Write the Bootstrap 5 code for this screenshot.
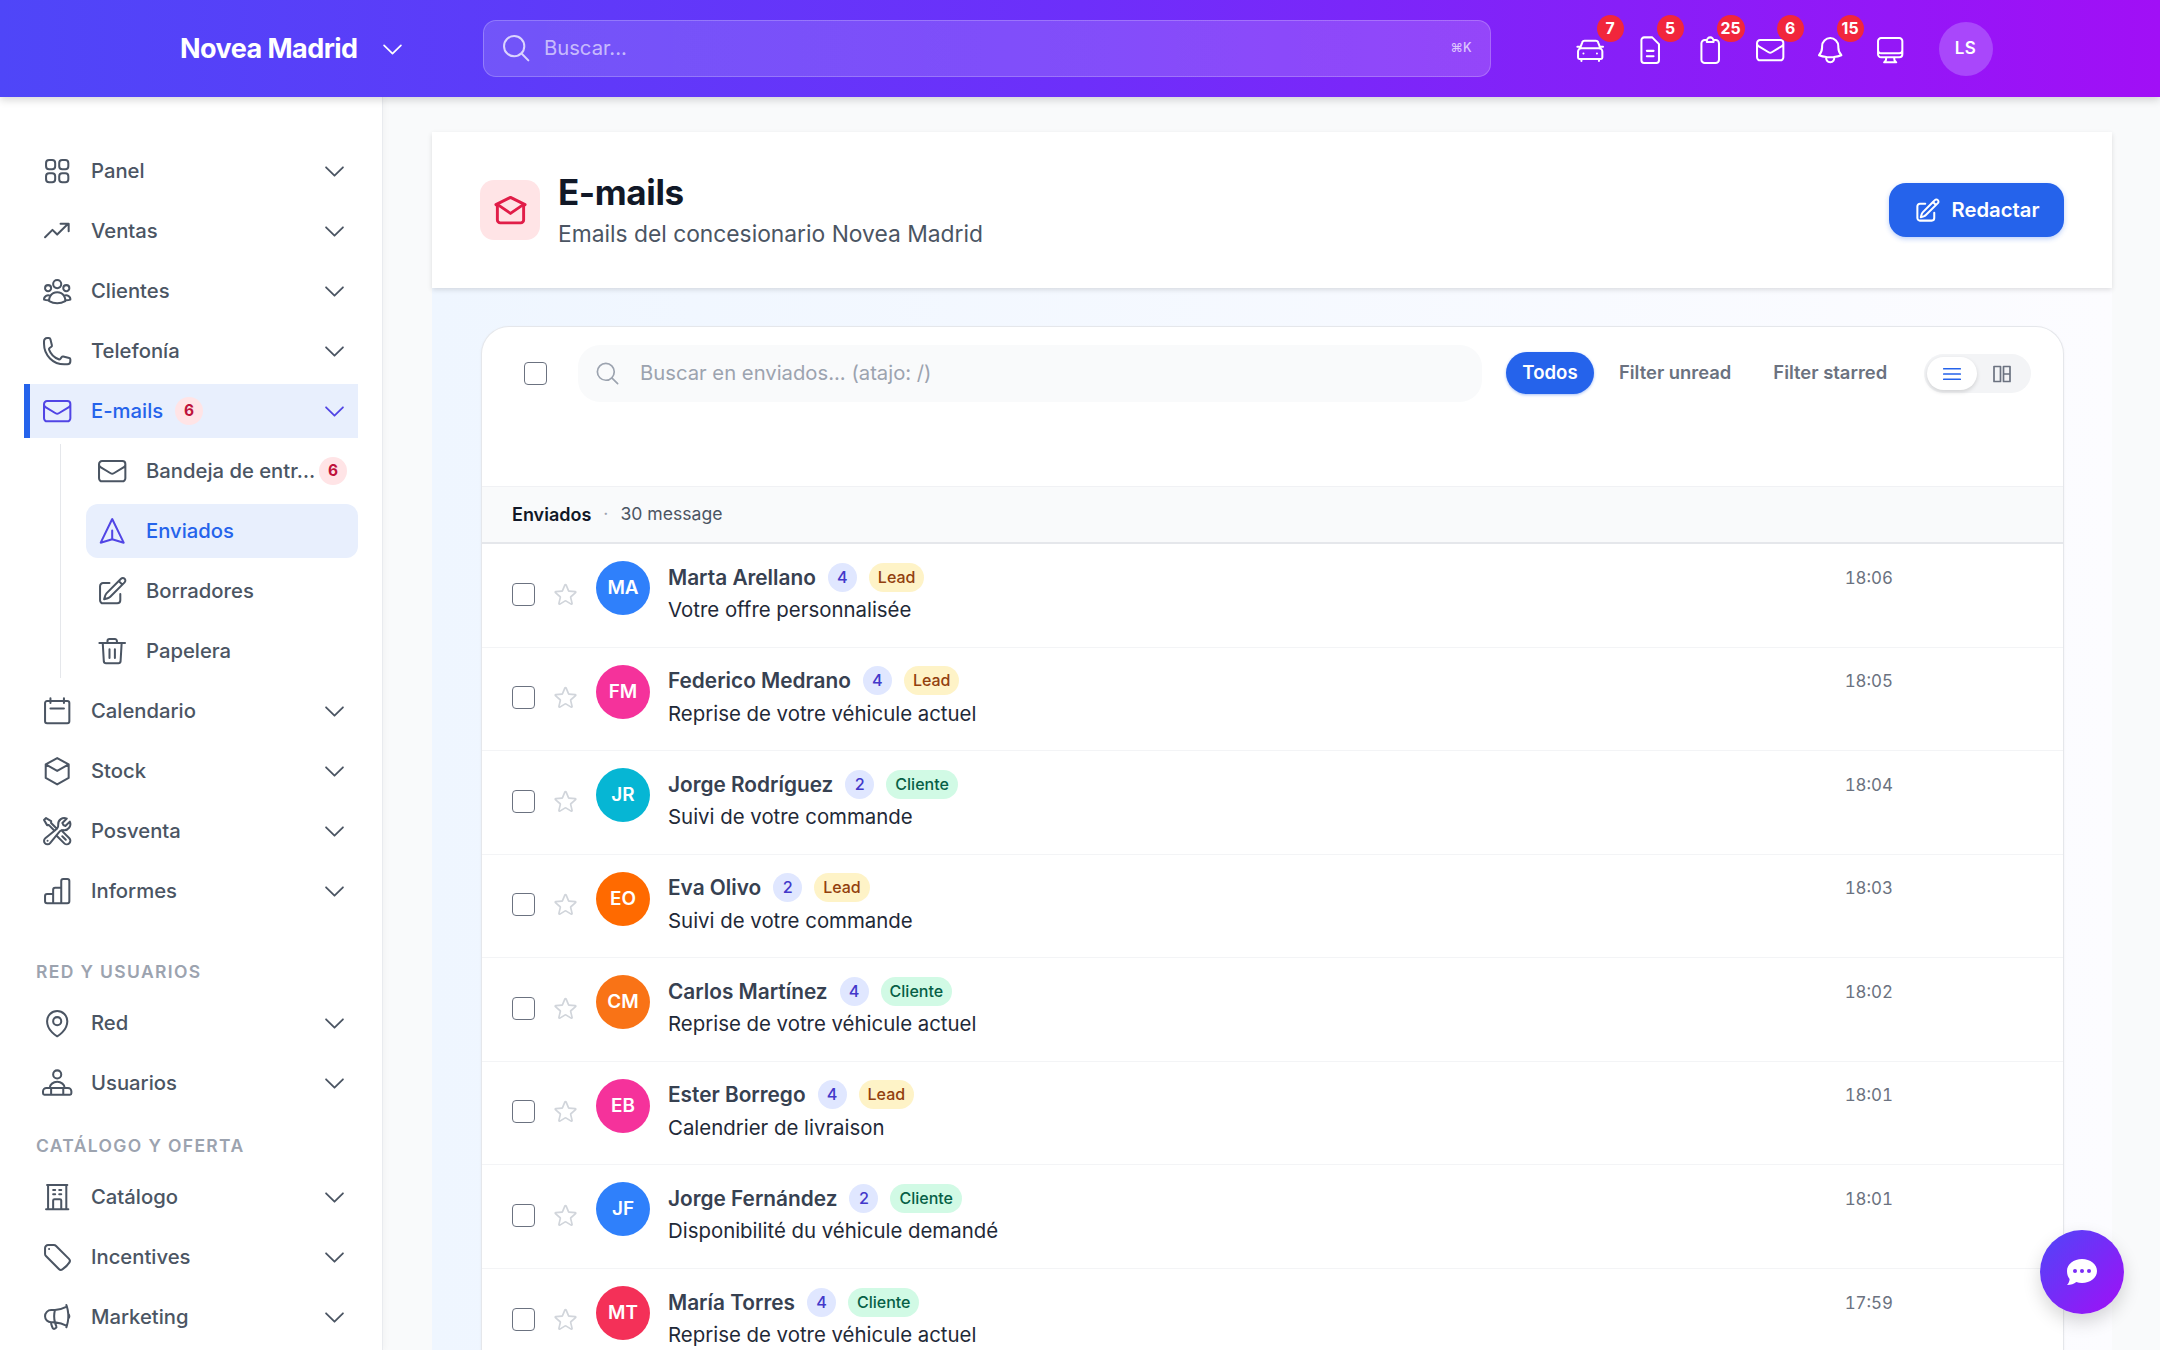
<!DOCTYPE html>
<html lang="es">
<head>
<meta charset="UTF-8">
<title>E-mails - Novea Madrid</title>
<link href="https://cdn.jsdelivr.net/npm/bootstrap@5.3.3/dist/css/bootstrap.min.css" rel="stylesheet">
<style>
  body{font-family:Inter,"Liberation Sans",sans-serif;background:#f9fafb;color:#374151;height:100vh;overflow:hidden}
  .ico{width:32.4px;height:32.4px;fill:none;stroke:currentColor;stroke-width:1.5;stroke-linecap:round;stroke-linejoin:round;flex:none}
  .sprite{display:none}

  .top-bar{height:97px;flex:none;padding:0 0 0 180px;background:linear-gradient(90deg,#4f46f8,#6d2ffa 50%,#a10ff6);box-shadow:0 3px 8px rgba(0,0,0,.16);position:relative;z-index:5;flex-wrap:nowrap;justify-content:flex-start}
  .brand-name{font-size:27px;font-weight:700;color:#fff;letter-spacing:-.55px;line-height:1}
  .brand-chev{width:27px;height:27px;color:#fff;margin:2px 0 0 21px}
  .top-search{width:1008px;height:57px;margin-left:77px;padding:0 18px 0 16px;border:1.5px solid rgba(255,255,255,.22);border-radius:13px;background:linear-gradient(90deg,rgba(255,255,255,.13),rgba(255,255,255,.16));color:rgba(255,255,255,.75)}
  .top-search input{background:none;border:0;outline:0;color:#fff;font-size:20.25px;flex:1;margin-left:12px;padding:0}
  .top-search input::placeholder{color:rgba(255,255,255,.62)}
  .kbd-hint{font-size:12.5px;color:rgba(255,255,255,.7);font-weight:500}
  .top-icons{margin-left:70px}
  .top-ico{width:60px;height:54px;color:#fff;position:relative;display:flex;align-items:center;justify-content:center;margin-top:3px}
  .top-count{position:absolute;top:-8px;left:36px;min-width:27px;height:27px;padding:0 4px;border-radius:14px;background:#f1263c;color:#fff;font-size:15.8px;font-weight:700;line-height:27px;text-align:center}
  .top-user{width:54px;height:54px;margin-left:18px;border-radius:50%;background:#a947fb;color:#fff;font-size:17px;font-weight:600;letter-spacing:.5px}

  .side-bar{width:383px;flex:none;background:#fff;border-right:1.5px solid #e9ebef;padding:47px 0 0 24px;box-shadow:2px 0 6px rgba(0,0,0,.03);overflow:hidden;z-index:2}
  .side-item{height:54px;width:334px;margin-bottom:6px;padding:0 10px 0 17px;display:flex;align-items:center;font-size:20.25px;font-weight:500;color:#4b5563;text-decoration:none;flex:none}
  .side-item .ico{margin-right:17.6px}
  .side-item .side-chev{width:27px;height:27px;margin:0 0 0 auto;stroke-width:1.6}
  .side-item.is-open{background:#e8effd;color:#2563eb;border-left:6px solid #2563eb;padding-left:11px}
  .side-item.is-open .ico{color:#5145e5}
  .side-num{width:28px;height:28px;border-radius:50%;background:#ffe4e6;color:#be123c;font-size:15.5px;font-weight:700;display:flex;align-items:center;justify-content:center;flex:none}
  .is-open .side-num{margin-left:12px}
  .side-sub{margin:0 0 6px 36px;padding-left:25px;border-left:1.5px solid #e5e7eb;height:234px}
  .side-sub .side-item{width:272px;padding:0 12px 0 10px}
  .side-sub .side-item.is-here{background:#e8effd;color:#2563eb;border-radius:12px}
  .side-sub .is-here .ico{color:#5145e5}
  .side-sub .cut{white-space:nowrap;flex:1;margin-right:4px}
  .side-title{font-size:17.5px;font-weight:600;letter-spacing:1.35px;color:#9ca3af;height:24px;line-height:24px;margin:24px 0 12px 12px}
  .side-title.first{margin-top:42px}

  .main-col{min-width:0}
  .title-wrap{padding:35px 48px 0 49px;flex:none}
  .title-card{height:156px;padding:0 48px;background:#fff;border:0;border-radius:0;box-shadow:0 2px 5px rgba(0,0,0,.12);flex-direction:row;align-items:center;position:relative;z-index:1}
  .title-ico{width:60px;height:60px;border-radius:14px;background:#ffe4e6;color:#e11d48;margin-right:18px;flex:none}
  .title-ico .ico{width:35px;height:35px;stroke-width:2}
  .title-txt{margin-top:1px}
  .title-txt h1{font-size:35px;font-weight:700;color:#111827;margin:0;line-height:44px;letter-spacing:-.4px}
  .title-txt p{font-size:22.8px;color:#4b5563;margin:3px 0 0;line-height:34px}
  .btn.compose{margin-left:auto;width:175px;height:54px;padding:0;border:0;border-radius:17px;background:#2563eb;color:#fff;font-size:20.25px;font-weight:600;box-shadow:0 2px 5px rgba(37,99,235,.3);gap:11px}
  .compose .ico{width:27px;height:27px;stroke-width:1.8}
  .list-outer{padding:0 48px 0 49px;min-height:0}
  .list-wrap{padding:38px 48px 0 49px;height:100%;background:linear-gradient(90deg,#eff6ff,#fcfcff)}
  .mail-card{border:1.5px solid #e5e7eb;border-bottom:0;border-radius:28px 28px 0 0;background:#fff;overflow:hidden;box-shadow:0 1px 3px rgba(0,0,0,.05)}
  .tool-row{height:159px;padding:18px 0 0 42px;align-items:flex-start}
  .tool-row .form-check-input{margin:17px 31px 0 0}
  .form-check-input{width:23px;height:23px;border:1.5px solid #6b7280;border-radius:4px;margin:0;flex:none}
  .mail-search{width:904px;height:57px;padding:0 16px;background:#f9fafb;border-radius:22px;color:#9ca3af;flex:none}
  .mail-search .ico{width:27px;height:27px}
  .mail-search input{background:none;border:0;outline:0;font-size:20.25px;flex:1;padding:0;margin-left:19px;color:#374151}
  .mail-search input::placeholder{color:#9ca3af}
  .pill-on{height:42px;width:88px;margin:7px 0 0 24px;padding:0;border:0;border-radius:21px;background:#2563eb;color:#fff;font-size:18.6px;font-weight:600;box-shadow:0 1px 3px rgba(37,99,235,.4)}
  .pill-off{height:42px;margin:7px 0 0 25px;padding:0;border:0;background:none;color:#6b7280;font-size:18.4px;font-weight:600}
  .pill-off + .pill-off{margin-left:42px}
  .view-sw{margin:9px 0 0 37px;width:107px;height:39px;padding:3px;background:#f3f4f6;border-radius:20px;flex:none}
  .view-sw span{width:50px;height:33px;display:flex;align-items:center;justify-content:center;color:#6b7280}
  .view-sw span.on{background:#fff;border-radius:17px;color:#2563eb;box-shadow:0 2px 4px rgba(0,0,0,.14)}
  .view-sw .ico{width:24px;height:24px;stroke-width:1.7}
  .group-row{height:57px;padding:0 30px;background:#f9fafb;border-top:1.5px solid #f0f1f4;border-bottom:1.5px solid #e5e7eb;font-size:17.6px}
  .group-row b{font-weight:600;color:#111827;font-size:18px}
  .group-row .sep{margin:0 12px;color:#9ca3af}
  .group-row span{color:#4b5563}
  .mail-row{height:103.5px;padding:0 170px 0 30px;border:0;border-bottom:1.5px solid #f3f4f6;border-radius:0!important;display:flex;align-items:center}
  .mail-row .form-check-input{margin-top:-2px}
  .mail-star{width:27px;height:27px;margin:-2px 17px 0 17px;color:#d1d5db}
  .mail-av{width:54px;height:54px;border-radius:50%;color:#fff;font-size:18.9px;font-weight:600;flex:none;margin:-14px 18px 0 0}
  .mail-body{flex:1;min-width:0;margin-top:-3px}
  .mail-top{height:32px;gap:12px}
  .mail-name{font-size:20.8px;font-weight:600;color:#374151}
  .mail-sub{font-size:20.4px;color:#1f2937;line-height:32px;margin-top:1px}
  .tag-num{width:29px;height:29px;padding:0;border-radius:50%;background:#e0e7ff;color:#4338ca;font-size:16.2px;font-weight:500;line-height:29px}
  .tag-kind{height:29px;padding:0 9px;border-radius:15px;font-size:16px;font-weight:500;line-height:29px}
  .tag-lead{background:#fef3c7;color:#92400e}
  .tag-client{background:#d1fae5;color:#065f46}
  .mail-time{font-size:16.9px;color:#6b7280;margin-top:-34px;font-variant-numeric:tabular-nums}
  .chat-fab{position:fixed;left:2040px;top:1230px;width:84px;height:84px;border-radius:50%;border:0;padding:0;background:linear-gradient(135deg,#4f46f8,#a10ff6);box-shadow:0 8px 18px rgba(0,0,0,.16);z-index:9}
  .chat-fab svg{width:34px;height:32px}
</style>
</head>
<body class="d-flex flex-column">

<svg class="sprite" xmlns="http://www.w3.org/2000/svg">
  <symbol id="i-chev" viewBox="0 0 24 24"><path d="m19.5 8.25-7.5 7.5-7.5-7.5"/></symbol>
  <symbol id="i-search" viewBox="0 0 24 24"><path d="m21 21-5.197-5.197m0 0A7.5 7.5 0 1 0 5.196 5.196a7.5 7.5 0 0 0 10.607 10.607Z"/></symbol>
  <symbol id="i-panel" viewBox="0 0 24 24"><path d="M3.75 6A2.25 2.25 0 0 1 6 3.75h2.25A2.25 2.25 0 0 1 10.5 6v2.25a2.25 2.25 0 0 1-2.25 2.25H6a2.25 2.25 0 0 1-2.25-2.25V6ZM3.75 15.75A2.25 2.25 0 0 1 6 13.5h2.25a2.25 2.25 0 0 1 2.25 2.25V18a2.25 2.25 0 0 1-2.25 2.25H6A2.25 2.25 0 0 1 3.75 18v-2.25ZM13.5 6a2.25 2.25 0 0 1 2.25-2.25H18A2.25 2.25 0 0 1 20.25 6v2.25A2.25 2.25 0 0 1 18 10.5h-2.25a2.25 2.25 0 0 1-2.25-2.25V6ZM13.5 15.75a2.25 2.25 0 0 1 2.25-2.25H18a2.25 2.25 0 0 1 2.25 2.25V18A2.25 2.25 0 0 1 18 20.25h-2.25A2.25 2.25 0 0 1 13.5 18v-2.25Z"/></symbol>
  <symbol id="i-trend" viewBox="0 0 24 24"><path d="M3 16.5 8.500 11l3.500 3.500L19.500 7M14.500 6.500H20.500V12"/></symbol>
  <symbol id="i-group" viewBox="0 0 24 24"><path d="M18 18.72a9.094 9.094 0 0 0 3.741-.479 3 3 0 0 0-4.682-2.72m.94 3.198.001.031c0 .225-.012.447-.037.666A11.944 11.944 0 0 1 12 21c-2.17 0-4.207-.576-5.963-1.584A6.062 6.062 0 0 1 6 18.719m12 0a5.971 5.971 0 0 0-.941-3.197m0 0A5.995 5.995 0 0 0 12 12.75a5.995 5.995 0 0 0-5.058 2.772m0 0a3 3 0 0 0-4.681 2.72 8.986 8.986 0 0 0 3.74.477m.94-3.197a5.971 5.971 0 0 0-.94 3.197M15 6.75a3 3 0 1 1-6 0 3 3 0 0 1 6 0Zm6 3a2.25 2.25 0 1 1-4.5 0 2.25 2.25 0 0 1 4.5 0Zm-13.5 0a2.25 2.25 0 1 1-4.5 0 2.25 2.25 0 0 1 4.5 0Z"/></symbol>
  <symbol id="i-phone" viewBox="0 0 24 24"><path d="M2.25 6.75c0 8.284 6.716 15 15 15h2.25a2.25 2.25 0 0 0 2.25-2.25v-1.372c0-.516-.351-.966-.852-1.091l-4.423-1.106c-.44-.11-.902.055-1.173.417l-.97 1.293c-.282.376-.769.542-1.21.38a12.035 12.035 0 0 1-7.143-7.143c-.162-.441.004-.928.38-1.21l1.293-.97c.363-.271.527-.734.417-1.173L6.963 3.102a1.125 1.125 0 0 0-1.091-.852H4.5A2.25 2.25 0 0 0 2.25 4.5v2.25Z"/></symbol>
  <symbol id="i-mail" viewBox="0 0 24 24"><path d="M21.75 6.75v10.5a2.25 2.25 0 0 1-2.25 2.25h-15a2.25 2.25 0 0 1-2.25-2.25V6.75m19.5 0A2.25 2.25 0 0 0 19.5 4.5h-15a2.25 2.25 0 0 0-2.25 2.25m19.5 0v.243a2.25 2.25 0 0 1-1.07 1.916l-7.5 4.615a2.25 2.25 0 0 1-2.36 0L3.32 8.91a2.25 2.25 0 0 1-1.07-1.916V6.75"/></symbol>
  <symbol id="i-mailopen" viewBox="0 0 24 24"><path d="M3 8.500v10a2 2 0 0 0 2 2h14a2 2 0 0 0 2-2v-10"/><path d="M2 8 12 3l10 5"/><path d="M4 8.500 12 14l8-5.500"/></symbol>
  <symbol id="i-send" viewBox="0 0 24 24"><path d="M12 3 3.500 20.500 12 18l8.500 2.500L12 3Zm0 15v-6.500"/></symbol>
  <symbol id="i-pen" viewBox="0 0 24 24"><path d="m16.862 4.487 1.687-1.688a1.875 1.875 0 1 1 2.652 2.652L10.582 16.07a4.5 4.5 0 0 1-1.897 1.13L6 18l.8-2.685a4.5 4.5 0 0 1 1.13-1.897l8.932-8.931Zm0 0L19.5 7.125M18 14v4.75A2.25 2.25 0 0 1 15.75 21H5.25A2.25 2.25 0 0 1 3 18.75V8.25A2.25 2.25 0 0 1 5.25 6H10"/></symbol>
  <symbol id="i-trash" viewBox="0 0 24 24"><path d="M2.500 6h19M8.500 6V4.500A1.500 1.500 0 0 1 10 3h4a1.500 1.500 0 0 1 1.500 1.500V6M5 6l.8 13.600A1.600 1.600 0 0 0 7.400 21h9.200a1.600 1.600 0 0 0 1.600-1.400L19 6M10 10.500v6.500M14 10.500v6.500"/></symbol>
  <symbol id="i-cal" viewBox="0 0 24 24"><path d="M7 2.500V6M17 2.500V6M4.500 4.500h15A1.500 1.500 0 0 1 21 6v13.500a1.500 1.500 0 0 1-1.500 1.500h-15A1.500 1.500 0 0 1 3 19.500V6a1.500 1.500 0 0 1 1.500-1.500ZM7 10h10"/></symbol>
  <symbol id="i-cube" viewBox="0 0 24 24"><path d="M12 2.250 20.500 7v10L12 21.750 3.500 17V7L12 2.250ZM3.500 7l8.500 4.800L20.500 7"/></symbol>
  <symbol id="i-tools" viewBox="0 0 24 24"><path d="M11.42 15.17 17.25 21A2.652 2.652 0 0 0 21 17.25l-5.877-5.877M11.42 15.17l2.496-3.03c.317-.384.74-.626 1.208-.766M11.42 15.17l-4.655 5.653a2.548 2.548 0 1 1-3.586-3.586l6.837-5.63m5.108-.233c.55-.164 1.163-.188 1.743-.14a4.5 4.5 0 0 0 4.486-6.336l-3.276 3.277a3.004 3.004 0 0 1-2.25-2.25l3.276-3.276a4.5 4.5 0 0 0-6.336 4.486c.091 1.076-.071 2.264-.904 2.95l-.102.085m-1.745 1.437L5.909 7.5H4.5L2.25 3.75l1.5-1.5L7.5 4.5v1.409l4.26 4.26m-1.745 1.437 1.745-1.437m6.615 8.206L15.75 15.75M4.867 19.125h.008v.008h-.008v-.008Z"/></symbol>
  <symbol id="i-chart" viewBox="0 0 24 24"><path d="M3 15.500a1.500 1.500 0 0 1 1.500-1.500H9v7H4.500A1.500 1.500 0 0 1 3 19.500v-4ZM9 11a1.500 1.500 0 0 1 1.500-1.500H15V21H9V11ZM15 4.500A1.500 1.500 0 0 1 16.500 3h3A1.500 1.500 0 0 1 21 4.500v15a1.500 1.500 0 0 1-1.500 1.500H15V4.500Z"/></symbol>
  <symbol id="i-pin" viewBox="0 0 24 24"><path d="M15 10.500a3 3 0 1 1-6 0 3 3 0 0 1 6 0Z"/><path d="M19.500 10.500c0 7.142-7.500 11.250-7.500 11.250S4.500 17.642 4.500 10.500a7.500 7.500 0 1 1 15 0Z"/></symbol>
  <symbol id="i-users" viewBox="0 0 24 24"><path d="M15 5.500a3 3 0 1 1-6 0 3 3 0 0 1 6 0ZM6.500 15.500a5.500 4.500 0 0 1 11 0M2.500 20.500a1 1 0 0 1-1-1V18a2.500 2.500 0 0 1 2.500-2.500h16a2.500 2.500 0 0 1 2.500 2.500v1.500a1 1 0 0 1-1 1h-19ZM7.500 15.500v5M16.500 15.500v5"/></symbol>
  <symbol id="i-build" viewBox="0 0 24 24"><path d="M3.750 21h16.500M4.500 3h15M5.250 3v18m13.500-18v18M9 6.750h1.500m-1.500 3h1.500m3-3H15m-1.500 3H15M9 21v-6.500a1 1 0 0 1 1-1h4a1 1 0 0 1 1 1V21"/></symbol>
  <symbol id="i-tag" viewBox="0 0 24 24"><path d="M9.568 3H5.250A2.250 2.250 0 0 0 3 5.250v4.318c0 .597.237 1.170.659 1.591l9.581 9.581c.699.699 1.780.872 2.607.330a18.095 18.095 0 0 0 5.223-5.223c.542-.827.369-1.908-.330-2.607L11.160 3.660A2.250 2.250 0 0 0 9.568 3Z"/><path d="M6 6h.008v.008H6V6Z"/></symbol>
  <symbol id="i-mega" viewBox="0 0 24 24"><path d="M10.340 15.840c-.688-.060-1.386-.090-2.090-.090H7.500a4.500 4.500 0 1 1 0-9h.750c.704 0 1.402-.030 2.090-.090m0 9.180c.253.962.584 1.892.985 2.783.247.550.060 1.210-.463 1.511l-.657.380c-.551.318-1.260.117-1.527-.461a20.845 20.845 0 0 1-1.440-4.282m3.102.069a18.030 18.030 0 0 1-.590-4.590c0-1.586.205-3.124.590-4.590m0 9.180a23.848 23.848 0 0 1 8.835 2.535M10.340 6.660a23.847 23.847 0 0 0 8.835-2.535m0 0A23.740 23.740 0 0 0 18.795 3m.380 1.125a23.910 23.910 0 0 1 1.014 5.395m-1.014 8.855c-.118.380-.245.754-.380 1.125m.380-1.125a23.910 23.910 0 0 0 1.014-5.395m0-3.460c.495.413.811 1.035.811 1.730 0 .695-.316 1.317-.811 1.730m0-3.460a24.347 24.347 0 0 1 0 3.460"/></symbol>
  <symbol id="i-car" viewBox="0 0 24 24"><path d="m4.500 10.500 1.500-4A2 2 0 0 1 7.900 5h8.200A2 2 0 0 1 18 6.500l1.500 4M3 13a2.500 2.500 0 0 1 2.500-2.500h13A2.500 2.500 0 0 1 21 13v4.500a1 1 0 0 1-1 1H4a1 1 0 0 1-1-1V13ZM5.500 18.500V20M18.500 18.500V20M7 14.500h.01M17 14.500h.01M4.500 9.500H2.500M19.500 9.500h2"/></symbol>
  <symbol id="i-file" viewBox="0 0 24 24"><path d="M13.500 2.500h-6a2 2 0 0 0-2 2v15a2 2 0 0 0 2 2h9a2 2 0 0 0 2-2v-12l-5-5ZM9.500 12.500h5M9.500 16.500h5"/></symbol>
  <symbol id="i-clip" viewBox="0 0 24 24"><path d="M9.500 4.500H8A2.500 2.500 0 0 0 5.500 7v12A2.500 2.500 0 0 0 8 21.500h8a2.500 2.500 0 0 0 2.500-2.500V7A2.500 2.500 0 0 0 16 4.500h-1.500M9.500 5a2.500 2.500 0 0 1 5 0v1h-5V5Z"/></symbol>
  <symbol id="i-bell" viewBox="0 0 24 24"><path d="M14.857 17.082a23.848 23.848 0 0 0 5.454-1.310A8.967 8.967 0 0 1 18 9.750V9A6 6 0 0 0 6 9v.750a8.967 8.967 0 0 1-2.312 6.022c1.733.640 3.560 1.085 5.455 1.310m5.714 0a24.255 24.255 0 0 1-5.714 0m5.714 0a3 3 0 1 1-5.714 0"/></symbol>
  <symbol id="i-desk" viewBox="0 0 24 24"><path d="M9 17.250v1.007a3 3 0 0 1-.879 2.122L7.500 21h9l-.621-.621A3 3 0 0 1 15 18.257V17.250m6-12V15a2.250 2.250 0 0 1-2.250 2.250H5.250A2.250 2.250 0 0 1 3 15V5.250m18 0A2.250 2.250 0 0 0 18.750 3H5.250A2.250 2.250 0 0 0 3 5.250m18 0V12a2.250 2.250 0 0 1-2.250 2.250H5.250A2.250 2.250 0 0 1 3 12V5.250"/></symbol>
  <symbol id="i-star" viewBox="0 0 24 24"><path d="M11.480 3.499a.562.562 0 0 1 1.040 0l2.125 5.111a.563.563 0 0 0 .475.345l5.518.442c.499.040.701.663.321.988l-4.204 3.602a.563.563 0 0 0-.182.557l1.285 5.385a.562.562 0 0 1-.840.610l-4.725-2.885a.562.562 0 0 0-.586 0L6.982 20.540a.562.562 0 0 1-.840-.610l1.285-5.386a.562.562 0 0 0-.182-.557l-4.204-3.602a.562.562 0 0 1 .321-.988l5.518-.442a.563.563 0 0 0 .475-.345L11.480 3.500Z"/></symbol>
  <symbol id="i-bars" viewBox="0 0 24 24"><path d="M3.750 6.750h16.500M3.750 12h16.500m-16.500 5.250h16.500"/></symbol>
  <symbol id="i-cols" viewBox="0 0 24 24"><path d="M4 4.500h6.500v15H4zM13.500 4.500H20v15h-6.500zM13.500 12H20"/></symbol>
</svg>

<nav class="navbar top-bar">
  <span class="brand-name">Novea Madrid</span>
  <svg class="ico brand-chev"><use href="#i-chev"/></svg>
  <div class="top-search d-flex align-items-center">
    <svg class="ico"><use href="#i-search"/></svg>
    <input type="text" placeholder="Buscar...">
    <span class="kbd-hint">⌘K</span>
  </div>
  <div class="top-icons d-flex align-items-center">
    <a class="top-ico"><svg class="ico"><use href="#i-car"/></svg><span class="top-count">7</span></a>
    <a class="top-ico"><svg class="ico"><use href="#i-file"/></svg><span class="top-count">5</span></a>
    <a class="top-ico"><svg class="ico"><use href="#i-clip"/></svg><span class="top-count">25</span></a>
    <a class="top-ico"><svg class="ico"><use href="#i-mail"/></svg><span class="top-count">6</span></a>
    <a class="top-ico"><svg class="ico"><use href="#i-bell"/></svg><span class="top-count">15</span></a>
    <a class="top-ico"><svg class="ico"><use href="#i-desk"/></svg></a>
    <div class="top-user d-flex align-items-center justify-content-center">LS</div>
  </div>
</nav>

<div class="d-flex flex-grow-1 overflow-hidden">
  <aside class="side-bar" id="side"></aside>
  <div class="main-col flex-grow-1 d-flex flex-column overflow-hidden">
    <div class="title-wrap">
      <div class="card title-card">
        <div class="title-ico d-flex align-items-center justify-content-center"><svg class="ico"><use href="#i-mailopen"/></svg></div>
        <div class="title-txt">
          <h1>E-mails</h1>
          <p>Emails del concesionario Novea Madrid</p>
        </div>
        <button class="btn compose d-flex align-items-center justify-content-center"><svg class="ico"><use href="#i-pen"/></svg>Redactar</button>
      </div>
    </div>
    <div class="list-outer flex-grow-1">
      <div class="list-wrap">
        <div class="card mail-card">
          <div class="d-flex tool-row">
            <input class="form-check-input" type="checkbox">
            <div class="mail-search d-flex align-items-center">
              <svg class="ico"><use href="#i-search"/></svg>
              <input type="text" placeholder="Buscar en enviados... (atajo: /)">
            </div>
            <button class="btn pill-on">Todos</button>
            <button class="btn pill-off">Filter unread</button>
            <button class="btn pill-off">Filter starred</button>
            <div class="view-sw d-flex">
              <span class="on"><svg class="ico"><use href="#i-bars"/></svg></span>
              <span><svg class="ico"><use href="#i-cols"/></svg></span>
            </div>
          </div>
          <div class="group-row d-flex align-items-center"><b>Enviados</b><i class="sep fst-normal">·</i><span>30 message</span></div>
          <div class="list-group list-group-flush" id="mails"></div>
        </div>
      </div>
    </div>
  </div>
</div>

<button class="chat-fab d-flex align-items-center justify-content-center" aria-label="Chat">
  <svg viewBox="0 0 34 32"><path fill="#fff" d="M17 3c8.300 0 15 5.200 15 12s-6.700 12-15 12c-2 0-4-.300-5.700-.900C9 28 6 29 2 29c1.600-1.700 2.500-3.800 2.600-6C2.900 21 2 18.100 2 15 2 8.200 8.700 3 17 3Z"/><circle cx="10" cy="15" r="2" fill="#7a2cf6"/><circle cx="17" cy="15" r="2" fill="#7a2cf6"/><circle cx="24" cy="15" r="2" fill="#7a2cf6"/></svg>
</button>

<script src="https://cdn.jsdelivr.net/npm/bootstrap@5.3.3/dist/js/bootstrap.bundle.min.js"></script>
<script>
const ico=n=>`<svg class="ico"><use href="#i-${n}"/></svg>`;
const item=(n,t)=>`<a class="side-item">${ico(n)}<span>${t}</span><svg class="ico side-chev"><use href="#i-chev"/></svg></a>`;

document.getElementById("side").innerHTML=
  item("panel","Panel")+item("trend","Ventas")+item("group","Clientes")+item("phone","Telefonía")+
  `<a class="side-item is-open">${ico("mail")}<span>E-mails</span><span class="side-num">6</span><svg class="ico side-chev"><use href="#i-chev"/></svg></a>
   <div class="side-sub">
     <a class="side-item">${ico("mail")}<span class="cut">Bandeja de entr…</span><span class="side-num">6</span></a>
     <a class="side-item is-here">${ico("send")}<span>Enviados</span></a>
     <a class="side-item">${ico("pen")}<span>Borradores</span></a>
     <a class="side-item">${ico("trash")}<span>Papelera</span></a>
   </div>`+
  item("cal","Calendario")+item("cube","Stock")+item("tools","Posventa")+item("chart","Informes")+
  `<div class="side-title first">RED Y USUARIOS</div>`+
  item("pin","Red")+item("users","Usuarios")+
  `<div class="side-title">CATÁLOGO Y OFERTA</div>`+
  item("build","Catálogo")+item("tag","Incentives")+item("mega","Marketing");

const mails=[
  ["MA","#2f80fb","Marta Arellano",4,"Lead","Votre offre personnalisée","18:06"],
  ["FM","#f5329b","Federico Medrano",4,"Lead","Reprise de votre véhicule actuel","18:05"],
  ["JR","#06b6d4","Jorge Rodríguez",2,"Cliente","Suivi de votre commande","18:04"],
  ["EO","#ff6a00","Eva Olivo",2,"Lead","Suivi de votre commande","18:03"],
  ["CM","#f97316","Carlos Martínez",4,"Cliente","Reprise de votre véhicule actuel","18:02"],
  ["EB","#f5329b","Ester Borrego",4,"Lead","Calendrier de livraison","18:01"],
  ["JF","#2f80fb","Jorge Fernández",2,"Cliente","Disponibilité du véhicule demandé","18:01"],
  ["MT","#f43058","María Torres",4,"Cliente","Reprise de votre véhicule actuel","17:59"]
];
document.getElementById("mails").innerHTML=mails.map(m=>`
  <div class="list-group-item mail-row">
    <input class="form-check-input" type="checkbox">
    <svg class="ico mail-star"><use href="#i-star"/></svg>
    <div class="mail-av d-flex align-items-center justify-content-center" style="background:${m[1]}">${m[0]}</div>
    <div class="mail-body">
      <div class="mail-top d-flex align-items-center">
        <span class="mail-name">${m[2]}</span>
        <span class="badge tag-num">${m[3]}</span>
        <span class="badge tag-kind ${m[4]=="Lead"?"tag-lead":"tag-client"}">${m[4]}</span>
      </div>
      <div class="mail-sub">${m[5]}</div>
    </div>
    <span class="mail-time">${m[6]}</span>
  </div>`).join("");
</script>
</body>
</html>
